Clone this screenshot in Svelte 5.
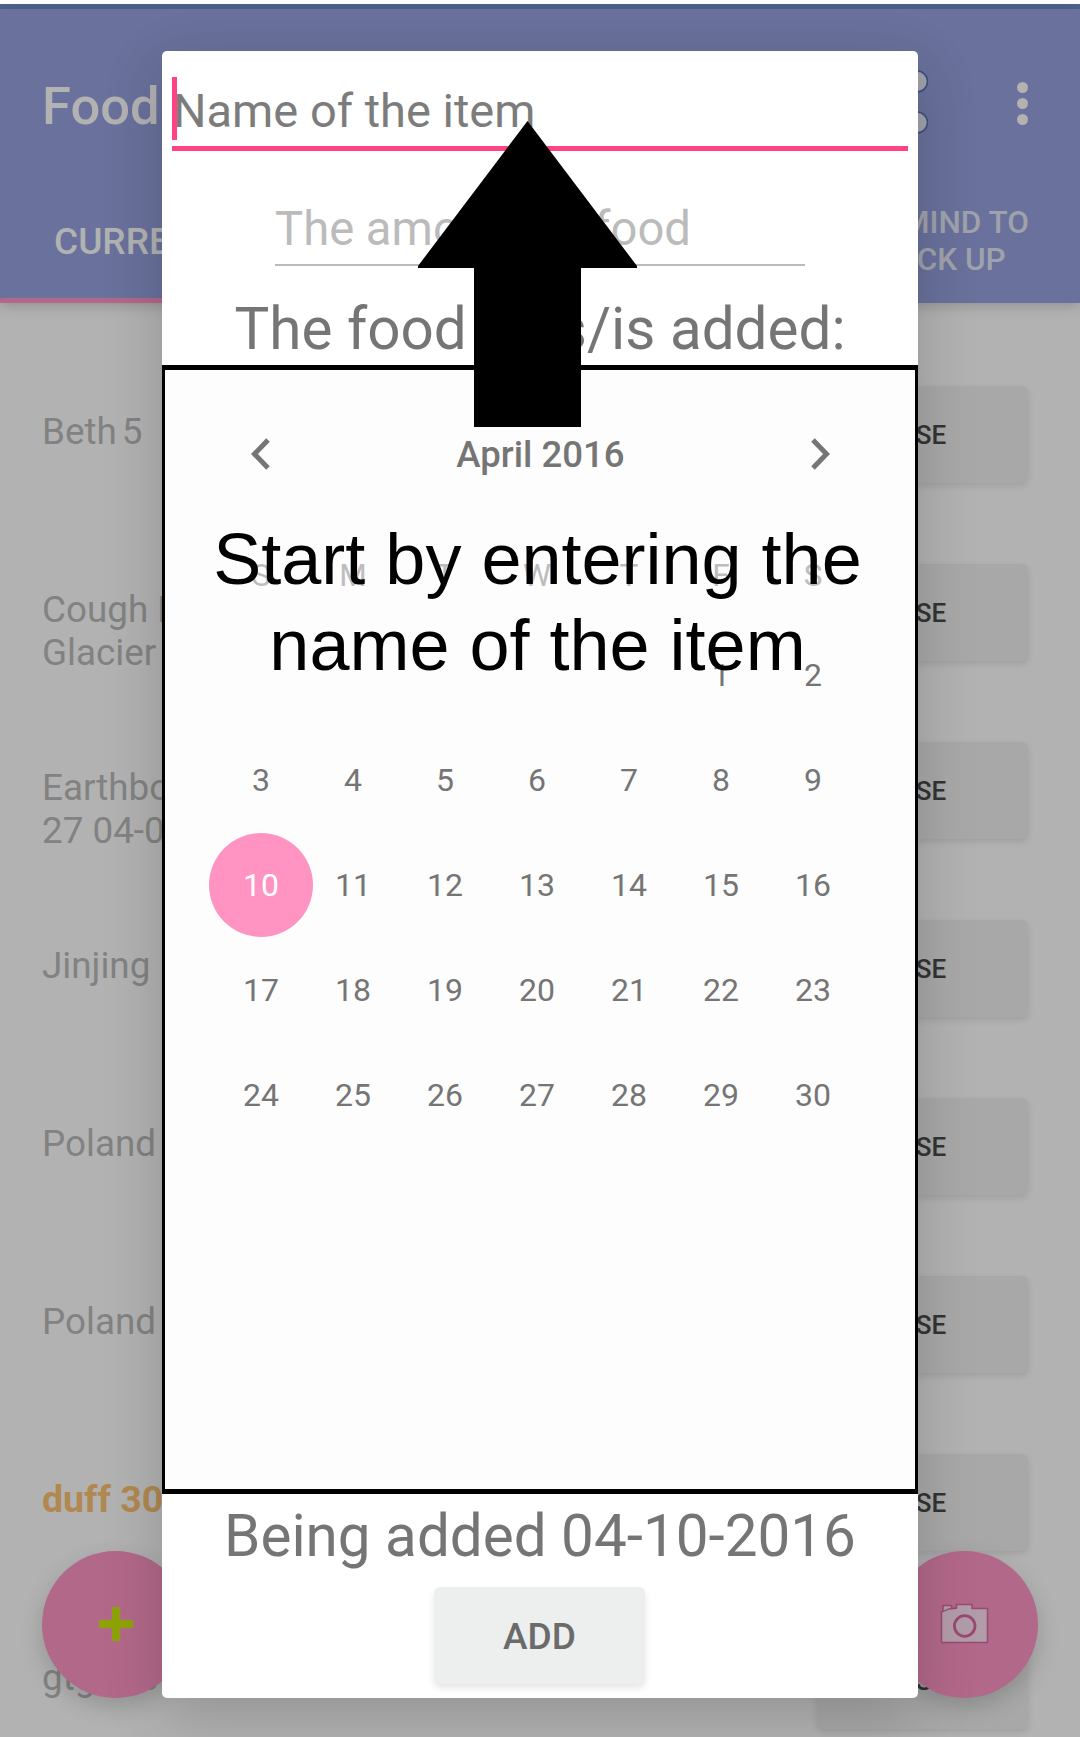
<script>
  const items = [
    { lines: ['Beth 5'], tight: true },
    { lines: ['Cough Drops', 'Glacier Mint'] },
    { lines: ['Earthbound', '27 04-05-2016'] },
    { lines: ['Jinjing'] },
    { lines: ['Poland Spring'] },
    { lines: ['Poland Spring'] },
    { lines: ['duff 30'], warn: true },
    { lines: ['gtg foo'] },
  ];
  const weekdays = ['S', 'M', 'T', 'W', 'T', 'F', 'S'];
  const days = [...Array(5).fill(null), ...Array.from({ length: 30 }, (_, i) => i + 1)];
  const selected = 10;
</script>

<div class="screen">
  <div class="status"></div>
  <header>
    <div class="toolbar">
      <h1>Food</h1>
      <svg class="share" width="50" height="70" viewBox="0 0 50 70">
        <path d="M39 14.5 12 35l27 20.5" fill="none" stroke="#3f5081" stroke-width="5" />
        <circle cx="39" cy="14.5" r="10.5" fill="#a1a3ab" stroke="#3f5081" stroke-width="1.6" />
        <circle cx="39" cy="55.5" r="10.5" fill="#a1a3ab" stroke="#3f5081" stroke-width="1.6" />
      </svg>
      <div class="more"><i></i><i></i><i></i></div>
    </div>
    <nav>
      <div class="tab active">CURRENT</div>
      <div class="tab remind">REMIND TO<br />PICK UP</div>
    </nav>
    <div class="indicator"></div>
  </header>

  <ul class="list">
    {#each items as item}
      <li>
        <div class="label" class:warn={item.warn} class:tight={item.tight}>
          {#each item.lines as line}<span>{line}</span>{/each}
        </div>
        <button class="use">USE</button>
      </li>
    {/each}
  </ul>

  <div class="fab left">
    <svg width="36" height="36" viewBox="0 0 36 36">
      <path d="M14 1h8v13h13v8H22v13h-8V22H1v-8h13z" fill="#8ca500" stroke="#a5845c" stroke-width=".7" />
    </svg>
  </div>
  <div class="fab right">
    <svg width="50" height="42" viewBox="0 0 50 42">
      <path d="M3 6V2.500h8.500v2.800h5V1.500H32V5.500H47.500V39.500H1.500V8.800L3 7.500z" fill="#b29ca7" stroke="#984a74" stroke-width="1.5" stroke-linejoin="round" />
      <path d="M2 9 9 6l7-.6" fill="none" stroke="#984a74" stroke-width="1.3" />
      <circle cx="24.700" cy="23" r="10.300" fill="#b29ca7" stroke="#984a74" stroke-width="2.800" />
    </svg>
  </div>

  <div class="dialog">
    <div class="field name"><span class="caret"></span>Name of the item</div>
    <div class="field amount">The amount of food</div>
    <div class="title">The food was/is added:</div>
    <section class="calendar">
      <div class="month">
        <svg width="20" height="32" viewBox="0 0 20 32"><path d="M17 2 3.500 16 17 30" fill="none" stroke="#757575" stroke-width="5" /></svg>
        <span>April 2016</span>
        <svg width="20" height="32" viewBox="0 0 20 32"><path d="M3 2 16.500 16 3 30" fill="none" stroke="#757575" stroke-width="5" /></svg>
      </div>
      <div class="grid week">
        {#each weekdays as w}<div>{w}</div>{/each}
      </div>
      <div class="grid days">
        {#each days as d}
          <div class:selected={d === selected}>{d ?? ''}</div>
        {/each}
      </div>
    </section>
    <div class="summary">Being added 04-10-2016</div>
    <button class="add">ADD</button>
  </div>

  <svg class="arrow" width="219" height="306" viewBox="0 0 219 306">
    <path d="M109.500 0 219 145v2h-56V306H56V147H0v-2z" />
  </svg>
  <p class="hint">Start by entering the<br />name of the item</p>
</div>

<style>
  :global(body) {
    margin: 0;
    background: #fff;
  }
  .screen {
    position: relative;
    width: 1080px;
    height: 1737px;
    overflow: hidden;
    box-sizing: border-box;
    padding-top: 4px;
    background: linear-gradient(#fff 4px, #b2b2b2 4px);
    font-family: Roboto, sans-serif;
  }
  .status {
    height: 5px;
    background: #4e628f;
  }
  header {
    height: 294px;
    display: flex;
    flex-direction: column;
    background: #69719c;
    box-shadow: 0 3px 12px rgba(0, 0, 0, 0.18);
  }
  .toolbar {
    display: flex;
    height: 190px;
    box-sizing: border-box;
    padding: 58px 52px 0 42px;
  }
  h1 {
    margin: 0;
    flex: 1;
    font-size: 52.5px;
    line-height: 79px;
    font-weight: 500;
    color: #b2b2b2;
  }
  .share {
    margin-right: 89px;
  }
  .more {
    display: flex;
    flex-direction: column;
    gap: 5px;
    padding-top: 15px;
  }
  .more i {
    width: 11px;
    height: 11px;
    border-radius: 50%;
    background: #b2b2b2;
  }
  nav {
    display: flex;
    justify-content: space-between;
    padding: 0 51px 0 54px;
    font-weight: 500;
  }
  .tab.active {
    padding-top: 21px;
    font-size: 37px;
    line-height: 44px;
    color: #b2b2b2;
  }
  .tab.remind {
    padding-top: 5px;
    font-size: 31.5px;
    line-height: 37px;
    color: #a0a2ab;
    text-align: center;
  }
  .indicator {
    margin-top: auto;
    width: 360px;
    height: 5px;
    background: #b26889;
  }
  .list {
    list-style: none;
    margin: 0;
    padding: 83px 52px 0 42px;
  }
  li {
    display: flex;
    justify-content: space-between;
    height: 178px;
  }
  .label {
    display: flex;
    flex-direction: column;
    padding-top: 24px;
    font-size: 36.8px;
    line-height: 43px;
    color: #828282;
    white-space: nowrap;
  }
  .label.tight {
    word-spacing: -4px;
  }
  .label.warn {
    font-size: 37.5px;
    font-weight: 700;
    color: #b1884f;
  }
  .use {
    width: 211px;
    height: 97px;
    padding: 0;
    border: 0;
    border-radius: 6px;
    background: #a8a8a8;
    box-shadow: 0 3px 6px rgba(0, 0, 0, 0.1);
    font: 500 26px Roboto, sans-serif;
    color: #333;
  }
  .fab {
    position: absolute;
    top: 1551px;
    width: 147px;
    height: 147px;
    border-radius: 50%;
    display: flex;
    align-items: center;
    justify-content: center;
    background: #b26889;
    box-shadow: 0 9px 22px rgba(0, 0, 0, 0.17);
  }
  .fab svg {
    margin-bottom: 2px;
  }
  .fab.left {
    left: 42px;
  }
  .fab.right {
    left: 891px;
  }
  .dialog {
    position: absolute;
    left: 162px;
    top: 51px;
    width: 756px;
    height: 1647px;
    border-radius: 5px;
    display: flex;
    flex-direction: column;
    align-items: center;
    background: #fff;
    color: #757575;
    box-shadow: 0 18px 60px rgba(0, 0, 0, 0.18);
  }
  .field {
    box-sizing: border-box;
    white-space: nowrap;
  }
  .name {
    position: relative;
    width: 736px;
    height: 100px;
    padding: 33px 0 0 1px;
    border-bottom: 5px solid #ff4383;
    font-size: 47px;
    line-height: 54px;
    color: #7c7c7c;
  }
  .caret {
    position: absolute;
    left: 0;
    top: 26px;
    width: 5px;
    height: 63px;
    background: #ff4383;
  }
  .amount {
    width: 530px;
    height: 115px;
    padding-top: 51px;
    border-bottom: 2px solid #bbb;
    font-size: 47.2px;
    line-height: 54px;
    color: #bbb;
  }
  .title {
    height: 99px;
    font-size: 58.4px;
    line-height: 126px;
    white-space: nowrap;
  }
  .calendar {
    width: 756px;
    height: 1129px;
    box-sizing: border-box;
    border: solid #000;
    border-width: 5px 3px;
    background: #fdfdfd;
  }
  .month {
    display: flex;
    justify-content: space-between;
    align-items: center;
    padding: 62px 85px 0 86px;
    height: 44px;
    font-size: 36.6px;
    font-weight: 500;
  }
  .grid {
    display: grid;
    grid-template-columns: repeat(7, 92px);
    padding-left: 50px;
    text-align: center;
  }
  .week {
    padding-top: 75px;
    font-size: 31.5px;
    line-height: 50px;
    color: #bdbdbd;
  }
  .days {
    padding-top: 22px;
    grid-auto-rows: 105px;
    font-size: 32px;
    line-height: 104px;
    justify-items: center;
  }
  .days div {
    width: 104px;
    height: 104px;
    margin: 0 -6px;
  }
  .days .selected {
    border-radius: 50%;
    background: #ff94c2;
    color: #fff;
  }
  .summary {
    font-size: 58.4px;
    line-height: 84px;
    white-space: nowrap;
  }
  .add {
    width: 211px;
    height: 97px;
    margin: 9px 1px 0 0;
    padding: 1px 0 0;
    border: 0;
    border-radius: 6px;
    background: #edefef;
    box-shadow: 0 4px 7px rgba(0, 0, 0, 0.1);
    font: 500 37px Roboto, sans-serif;
    color: #6b6b6b;
  }
  .arrow {
    position: absolute;
    left: 418px;
    top: 121px;
  }
  .hint {
    position: absolute;
    left: 162px;
    top: 516px;
    width: 751px;
    margin: 0;
    text-align: center;
    font: 72px/86px 'Liberation Sans', sans-serif;
    color: #000;
  }
</style>
